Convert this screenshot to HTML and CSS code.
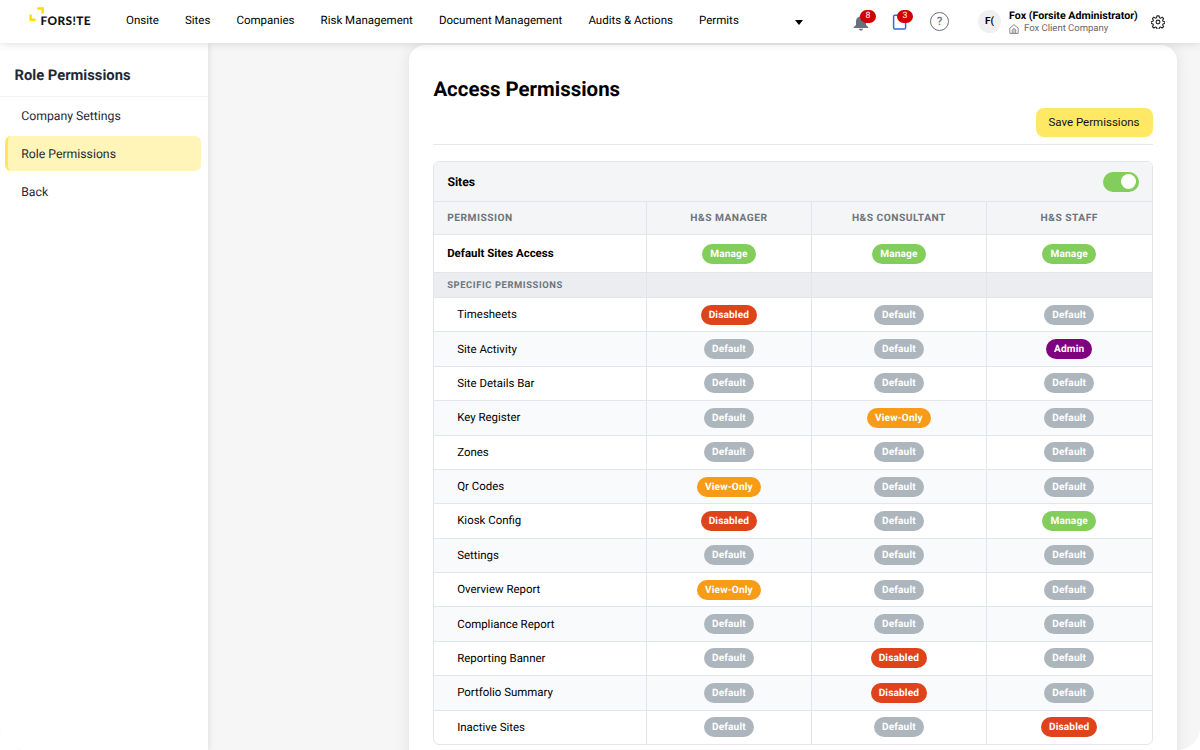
FILE: index.html
```html
<!DOCTYPE html>
<html lang="en">
<head>
    <meta charset="UTF-8">
    <meta name="viewport" content="width=device-width, initial-scale=1.0">
    <title>Access Permissions</title>
    <link rel="stylesheet" href="styles.css">
</head>
<body>
<div class="app">
    <header class="topbar">
        <div class="logo">
            <svg class="logo-mark" width="15" height="15" viewBox="0 0 15 15" fill="none" stroke="#ffdd00" stroke-width="2.4">
                <path d="M8.2 1.5h5.5v5M1.6 7.6v5.2h5"/>
            </svg>
            <span class="logo-text">FORS!TE</span>
        </div>
        <nav class="nav">
            <a>Onsite</a>
            <a>Sites</a>
            <a>Companies</a>
            <a>Risk Management</a>
            <a>Document Management</a>
            <a>Audits &amp; Actions</a>
            <a>Permits</a>
        </nav>
        <span class="caret"></span>
        <div class="tools">
            <div class="tool bell">
                <svg width="16" height="17" viewBox="0 0 16 17" fill="#6b7080">
                    <path d="M8 .8c.8 0 1.3.5 1.3 1.3v.4c2.3.6 3.7 2.6 3.7 5v3.4l2.2 2.1v1H.8v-1L3 10.9V7.5c0-2.4 1.4-4.4 3.7-5v-.4C6.7 1.3 7.2.8 8 .8zM6 14.7h4c0 1-.8 1.8-2 1.8s-2-.8-2-1.8z"/>
                </svg>
                <span class="badge">8</span>
            </div>
            <div class="tool clip">
                <svg width="15" height="17" viewBox="0 0 15 17" fill="none" stroke="#2f6bea" stroke-width="1.5">
                    <rect x="1.6" y="1.2" width="12" height="13.8" rx="1.3"/>
                </svg>
                <span class="badge">3</span>
            </div>
            <div class="help">?</div>
        </div>
        <div class="avatar">F(</div>
        <div class="user">
            <div class="user-name">Fox (Forsite Administrator)</div>
            <div class="user-company">
                <svg width="10" height="10" viewBox="0 0 10 10" fill="none" stroke="#6f6f6f" stroke-width=".8">
                    <path d="M.8 4.1 5 .7l4.2 3.4v5.3H.8zM3.3 9.4V6.200c0-2 3.400-2 3.400 0v3.200M5 5v4.400"/>
                </svg>
                <span>Fox Client Company</span>
            </div>
        </div>
        <svg class="gear" width="14" height="14" viewBox="0 0 24 24" fill="none" stroke="#222" stroke-width="1.9" stroke-linejoin="round">
            <path d="M10.2 1.5h3.6l.7 3.1 1.9.8 2.700-1.700 2.500 2.500-1.700 2.700.8 1.900 3 .7v3l-3 .7-.8 1.900 1.700 2.700-2.500 2.500-2.700-1.700-1.900.8-.7 3.100h-3.600l-.7-3.100-1.900-.8-2.700 1.700-2.500-2.500 1.700-2.700-.8-1.900-3-.7v-3l3-.7.8-1.900-1.700-2.700 2.500-2.500 2.700 1.700 1.900-.8z"/>
            <circle cx="12" cy="12" r="3.3"/>
        </svg>
    </header>

    <div class="body">
        <aside class="sidebar">
            <h2>Role Permissions</h2>
            <a class="side-link">Company Settings</a>
            <a class="side-link active">Role Permissions</a>
            <a class="side-link">Back</a>
        </aside>

        <main class="content">
            <section class="card">
                <h1>Access Permissions</h1>
                <div class="actions">
                    <button class="save">Save Permissions</button>
                </div>

                <div class="panel">
                    <div class="panel-head">
                        <span>Sites</span>
                        <span class="toggle"></span>
                    </div>
                    <div class="row head">
                        <div>Permission</div><div>H&amp;S Manager</div><div>H&amp;S Consultant</div><div>H&amp;S Staff</div>
                    </div>
                    <div class="row main">
                        <div>Default Sites Access</div>
                        <div><span class="pill manage">Manage</span></div>
                        <div><span class="pill manage">Manage</span></div>
                        <div><span class="pill manage">Manage</span></div>
                    </div>
                    <div class="row sub">
                        <div>Specific Permissions</div><div></div><div></div><div></div>
                    </div>
                    <div class="row item">
                        <div>Timesheets</div>
                        <div><span class="pill disabled">Disabled</span></div>
                        <div><span class="pill">Default</span></div>
                        <div><span class="pill">Default</span></div>
                    </div>
                    <div class="row item alt">
                        <div>Site Activity</div>
                        <div><span class="pill">Default</span></div>
                        <div><span class="pill">Default</span></div>
                        <div><span class="pill admin">Admin</span></div>
                    </div>
                    <div class="row item">
                        <div>Site Details Bar</div>
                        <div><span class="pill">Default</span></div>
                        <div><span class="pill">Default</span></div>
                        <div><span class="pill">Default</span></div>
                    </div>
                    <div class="row item alt">
                        <div>Key Register</div>
                        <div><span class="pill">Default</span></div>
                        <div><span class="pill view">View-Only</span></div>
                        <div><span class="pill">Default</span></div>
                    </div>
                    <div class="row item">
                        <div>Zones</div>
                        <div><span class="pill">Default</span></div>
                        <div><span class="pill">Default</span></div>
                        <div><span class="pill">Default</span></div>
                    </div>
                    <div class="row item alt">
                        <div>Qr Codes</div>
                        <div><span class="pill view">View-Only</span></div>
                        <div><span class="pill">Default</span></div>
                        <div><span class="pill">Default</span></div>
                    </div>
                    <div class="row item">
                        <div>Kiosk Config</div>
                        <div><span class="pill disabled">Disabled</span></div>
                        <div><span class="pill">Default</span></div>
                        <div><span class="pill manage">Manage</span></div>
                    </div>
                    <div class="row item alt">
                        <div>Settings</div>
                        <div><span class="pill">Default</span></div>
                        <div><span class="pill">Default</span></div>
                        <div><span class="pill">Default</span></div>
                    </div>
                    <div class="row item">
                        <div>Overview Report</div>
                        <div><span class="pill view">View-Only</span></div>
                        <div><span class="pill">Default</span></div>
                        <div><span class="pill">Default</span></div>
                    </div>
                    <div class="row item alt">
                        <div>Compliance Report</div>
                        <div><span class="pill">Default</span></div>
                        <div><span class="pill">Default</span></div>
                        <div><span class="pill">Default</span></div>
                    </div>
                    <div class="row item">
                        <div>Reporting Banner</div>
                        <div><span class="pill">Default</span></div>
                        <div><span class="pill disabled">Disabled</span></div>
                        <div><span class="pill">Default</span></div>
                    </div>
                    <div class="row item alt">
                        <div>Portfolio Summary</div>
                        <div><span class="pill">Default</span></div>
                        <div><span class="pill disabled">Disabled</span></div>
                        <div><span class="pill">Default</span></div>
                    </div>
                    <div class="row item">
                        <div>Inactive Sites</div>
                        <div><span class="pill">Default</span></div>
                        <div><span class="pill">Default</span></div>
                        <div><span class="pill disabled">Disabled</span></div>
                    </div>
                </div>
            </section>
        </main>
    </div>
</div>
</body>
</html>
```
FILE: styles.css
```css
* {
    margin: 0;
    padding: 0;
    box-sizing: border-box;
}
body {
    background: #fff;
    color: #000;
    font-family: Roboto, "Liberation Sans", sans-serif;
    font-size: 11.45px;
    text-rendering: geometricPrecision;
    height: 750px;
    overflow: hidden;
}
.app {
    display: flex;
    flex-direction: column;
    height: 750px;
    overflow: hidden;
    background: #f6f6f6;
    border-radius: 0 0 22px 22px;
}

/* top bar */
.topbar {
    display: flex;
    flex: none;
    position: relative;
    z-index: 2;
    height: 43px;
    padding-left: 29px;
    background: #fff;
    box-shadow: 0 1px 8px rgba(0, 0, 0, 0.13);
    white-space: nowrap;
}
.logo {
    display: flex;
    width: 97px;
    padding-top: 7px;
}
.logo-text {
    margin: 6px 0 0 -3.5px;
    font-family: Lato, sans-serif;
    font-size: 11.8px;
    font-weight: 900;
    line-height: 15px;
    letter-spacing: 0.4px;
    color: #111;
}
.nav {
    display: flex;
    gap: 26.1px;
    width: 668.5px;
    line-height: 41px;
    font-size: 11.5px;
}
.caret {
    margin-top: 20px;
    width: 8px;
    height: 5px;
    border: 4px solid transparent;
    border-top: 5px solid #000;
    border-bottom: 0;
}
.tools {
    display: flex;
    margin-left: 50.5px;
    width: 125px;
}
.tool {
    position: relative;
    width: 38.5px;
    padding-top: 14px;
}
.badge {
    position: absolute;
    top: 10px;
    left: 7px;
    width: 16px;
    height: 13px;
    border-radius: 7px;
    background: #d10000;
    color: #fff;
    font-size: 8.8px;
    line-height: 13.5px;
    text-align: center;
}
.clip .badge {
    left: 5.5px;
}
.help {
    margin-top: 12px;
    width: 19px;
    height: 19px;
    border: 1.5px solid #6b7080;
    border-radius: 50%;
    color: #6b7080;
    font-size: 11.5px;
    font-weight: 500;
    line-height: 17px;
    text-align: center;
}
.avatar {
    margin-top: 10px;
    width: 23px;
    height: 23px;
    border-radius: 50%;
    background: #f0f0f0;
    font-size: 10px;
    font-weight: 700;
    line-height: 23px;
    text-align: center;
}
.user {
    width: 141.5px;
    margin-left: 8px;
    padding-top: 9px;
}
.user-name {
    font-size: 10.65px;
    font-weight: 700;
    line-height: 13px;
}
.user-company {
    display: flex;
    align-items: center;
    gap: 5px;
    color: #666;
    font-size: 9.5px;
    line-height: 14px;
}
.gear {
    margin-top: 15px;
}

/* sidebar */
.body {
    display: flex;
    flex: 1;
    min-height: 0;
}
.sidebar {
    flex: none;
    width: 208px;
    background: #fff;
    box-shadow: 1px 0 6px rgba(0, 0, 0, 0.1);
}
.sidebar h2 {
    height: 54px;
    margin-bottom: 1px;
    padding-left: 14.5px;
    border-bottom: 1px solid #f1f2f4;
    color: #1f2937;
    font-size: 14.75px;
    font-weight: 700;
    line-height: 64px;
}
.side-link {
    display: block;
    height: 35px;
    margin: 0 7px 3px 5px;
    padding-left: 13.2px;
    border-left: 3px solid transparent;
    border-radius: 6px;
    color: #1f2937;
    font-size: 12.25px;
    line-height: 36.5px;
}
.side-link.active {
    border-left-color: #ffe566;
    background: #fff5b8;
}

/* content card */
.content {
    padding: 2px 0 0 201px;
}
.card {
    width: 768px;
    height: 730px;
    padding: 0 24.5px 0 24.4px;
    background: #fff;
    border-radius: 16px;
    box-shadow: 0 0 16px rgba(0, 0, 0, 0.09);
}
.card h1 {
    height: 63px;
    font-size: 20.45px;
    font-weight: 700;
    line-height: 88px;
}
.actions {
    display: flex;
    justify-content: flex-end;
    height: 37px;
    border-bottom: 1px solid #e6e8eb;
}
.save {
    width: 117px;
    height: 29px;
    padding-bottom: 1px;
    border: 0;
    border-radius: 8px;
    background: #ffe863;
    color: #111;
    font-family: inherit;
    font-size: 11.5px;
}

/* permissions table */
.panel {
    margin-top: 16px;
    border: 1px solid #e2e6ea;
    border-radius: 6px;
    overflow: hidden;
}
.panel-head {
    display: flex;
    justify-content: space-between;
    align-items: center;
    height: 39px;
    padding: 0 13px;
    background: #f4f5f7;
    font-size: 12.2px;
    font-weight: 700;
}
.toggle {
    display: flex;
    justify-content: flex-end;
    width: 36px;
    height: 20px;
    padding: 2.5px;
    border-radius: 10px;
    background: #82cd5c;
}
.toggle::before {
    content: "";
    width: 15px;
    height: 15px;
    border-radius: 50%;
    background: #fff;
}
.row {
    display: grid;
    grid-template-columns: 212.5px 165px 175px 1fr;
    height: 34.38px;
    border-top: 1px solid #e2e6ea;
}
.row > div {
    display: flex;
    align-items: center;
    justify-content: center;
    border-right: 1px solid #e2e6ea;
}
.row > div:first-child {
    justify-content: flex-start;
    padding: 0 0 1px 12.8px;
}
.row > div:last-child {
    border-right: 0;
}
.row.item > div:first-child {
    padding-left: 22.8px;
}
.row.alt {
    background: #f9fafc;
}
.row.head {
    height: 33px;
    background: #f4f5f7;
    color: #6c757d;
    font-size: 10.2px;
    font-weight: 700;
    letter-spacing: 0.5px;
    text-transform: uppercase;
}
.row.head > div:first-child {
    padding-bottom: 0;
}
.row.main {
    height: 38px;
    font-weight: 700;
}
.row.sub {
    height: 25px;
    background: #ebedf1;
    color: #6c757d;
    font-size: 9.4px;
    font-weight: 700;
    letter-spacing: 0.6px;
    text-transform: uppercase;
}
.row.sub > div:first-child {
    padding-bottom: 0;
}
.pill {
    height: 20px;
    padding: 0 8px;
    border-radius: 10px;
    background: #adb5bd;
    color: #fff;
    font-size: 10.1px;
    font-weight: 700;
    line-height: 21px;
    letter-spacing: 0.15px;
}
.pill.manage {
    background: #82cd5c;
}
.pill.disabled {
    background: #de431b;
}
.pill.view {
    background: #f89c17;
}
.pill.admin {
    background: #800080;
}
```
